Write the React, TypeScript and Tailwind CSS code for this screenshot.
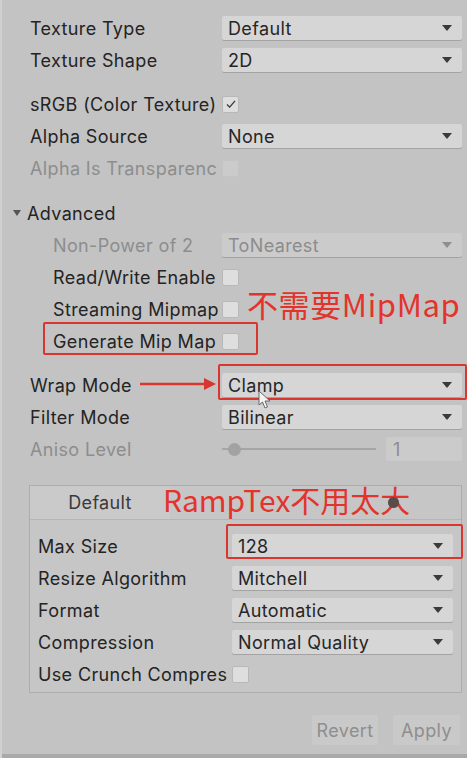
import type { ReactNode } from 'react'

const Caret = ({ dim }: { dim?: boolean }) => (
    <svg width="10" height="6" viewBox="0 0 10 6" className="shrink-0">
        <path d="M0 0 L10 0 L5 6 Z" fill={dim ? '#8f8f8f' : '#3a3a3a'} />
    </svg>
)

const Dropdown = ({ value, dim }: { value: string; dim?: boolean }) => (
    <div
        className={`flex h-[24px] items-center justify-between rounded-[2px] pl-[6px] pr-[10px] shadow-[0_1px_0_#a3a3a3] ${
            dim ? 'bg-[#cbcbcb] text-[#8c8c8c]' : 'bg-[#d6d6d6] text-[#262626]'
        }`}
    >
        <span className="whitespace-nowrap">{value}</span>
        <Caret dim={dim} />
    </div>
)

const Check = ({ checked, dim }: { checked?: boolean; dim?: boolean }) => (
    <div
        className={`flex h-[17px] w-[17px] items-center justify-center rounded-[2px] border ${
            dim ? 'border-[#c4c4c4] bg-[#cbcbcb]' : 'border-[#b8b8b8] bg-[#dedede]'
        }`}
    >
        {checked && (
            <svg width="10" height="8" viewBox="0 0 11 9">
                <path d="M1 5 L4 8 L10 1" stroke="#3a3a3a" strokeWidth="1.5" fill="none" />
            </svg>
        )}
    </div>
)

const Row = ({
    label,
    children,
    indent,
    dim,
    labelW = 'w-[192px]',
}: {
    label: string
    children?: ReactNode
    indent?: boolean
    dim?: boolean
    labelW?: string
}) => (
    <div className="flex h-[32px] items-center">
        <div
            className={`${labelW} shrink-0 whitespace-nowrap ${indent ? 'pl-[23px]' : ''} ${
                dim ? 'text-[#8d8d8d]' : 'text-[#242424]'
            }`}
        >
            {label}
        </div>
        <div className="flex-1">{children}</div>
    </div>
)

export default function App() {
    return (
        <div className="relative h-[758px] w-[467px] overflow-hidden border-l-[2px] border-[#d0d0d0] bg-[#c3c3c3] font-['Inter',sans-serif] text-[18px] tracking-[0.02em]">
            <div className="flex flex-col pl-[28px] pr-[5px] pt-[12px]">
                <Row label="Texture Type">
                    <Dropdown value="Default" />
                </Row>
                <Row label="Texture Shape">
                    <Dropdown value="2D" />
                </Row>

                <div className="mt-[12px]">
                    <Row label="sRGB (Color Texture)">
                        <Check checked />
                    </Row>
                    <Row label="Alpha Source">
                        <Dropdown value="None" />
                    </Row>
                    <Row label="Alpha Is Transparenc" dim>
                        <Check dim />
                    </Row>
                </div>

                <div className="mt-[13px]">
                    <div className="flex h-[32px] items-center gap-[6px] text-[#242424]">
                        <svg width="8" height="6" viewBox="0 0 8 6" className="-ml-[17px]">
                            <path d="M0 0 L8 0 L4 6 Z" fill="#555" />
                        </svg>
                        <span>Advanced</span>
                    </div>
                    <Row label="Non-Power of 2" indent dim>
                        <Dropdown value="ToNearest" dim />
                    </Row>
                    <Row label="Read/Write Enable" indent>
                        <Check />
                    </Row>
                    <Row label="Streaming Mipmap" indent>
                        <Check />
                    </Row>
                    <Row label="Generate Mip Map" indent>
                        <Check />
                    </Row>
                </div>

                <div className="mt-[12px]">
                    <Row label="Wrap Mode">
                        <Dropdown value="Clamp" />
                    </Row>
                    <Row label="Filter Mode">
                        <Dropdown value="Bilinear" />
                    </Row>
                    <Row label="Aniso Level" dim>
                        <div className="flex items-center gap-[10px]">
                            <div className="relative flex h-[14px] flex-1 items-center">
                                <div className="h-[2px] w-full bg-[#a6a6a6]" />
                                <div className="absolute left-[6px] h-[13px] w-[13px] rounded-full bg-[#a2a2a2]" />
                            </div>
                            <div className="flex h-[24px] w-[76px] items-center rounded-[2px] bg-[#cbcbcb] pl-[7px] text-[#8d8d8d]">
                                1
                            </div>
                        </div>
                    </Row>
                </div>

                <div className="-ml-px mt-[20px] border border-[#adadad] bg-[#c6c6c6] pb-[2px]">
                    <div className="flex h-[34px] border-b border-[#b5b5b5]">
                        <div className="flex w-[140px] items-center justify-center bg-[#cacaca] text-[#3a3a3a]">
                            Default
                        </div>
                    </div>
                    <div className="mt-[10px] px-[8px]">
                        <Row label="Max Size" labelW="w-[194px]">
                            <Dropdown value="128" />
                        </Row>
                        <Row label="Resize Algorithm" labelW="w-[194px]">
                            <Dropdown value="Mitchell" />
                        </Row>
                        <Row label="Format" labelW="w-[194px]">
                            <Dropdown value="Automatic" />
                        </Row>
                        <Row label="Compression" labelW="w-[194px]">
                            <Dropdown value="Normal Quality" />
                        </Row>
                        <Row label="Use Crunch Compres" labelW="w-[194px]">
                            <Check />
                        </Row>
                    </div>
                </div>

                <div className="mt-[22px] flex justify-end gap-[15px] pr-[2px]">
                    <div className="flex h-[30px] w-[66px] items-center justify-center rounded-[2px] bg-[#c9c9c9] text-[#8e8e8e]">
                        Revert
                    </div>
                    <div className="flex h-[30px] w-[67px] items-center justify-center rounded-[2px] bg-[#c9c9c9] text-[#8e8e8e]">
                        Apply
                    </div>
                </div>
            </div>
            <div className="absolute bottom-0 left-0 h-[4px] w-full bg-[#a9a9a9]" />

            {/* red annotations drawn over the inspector */}
            <div className="absolute left-[41px] top-[322px] h-[33px] w-[215px] rounded-[2px] border-[2px] border-[#d9362f]" />
            <div className="absolute left-[216px] top-[364px] h-[36px] w-[249px] rounded-[2px] border-[2px] border-[#d9362f]" />
            <div className="absolute left-[224px] top-[524px] h-[35px] w-[237px] rounded-[2px] border-[2px] border-[#d9362f]" />
            <div className="absolute left-[245px] top-[288px] whitespace-nowrap font-['Noto_Sans_CJK_SC',sans-serif] text-[31px] leading-none tracking-[0.02em] text-[#e2342c]">
                不需要MipMap
            </div>
            <div className="absolute left-[161px] top-[484px] whitespace-nowrap font-['Noto_Sans_CJK_SC',sans-serif] text-[30px] leading-none tracking-normal text-[#e2342c]">
                RampTex不用太大
            </div>
            <div className="absolute left-[386px] top-[497px] h-[11px] w-[11px] rounded-full bg-[#5a4a4a]" />
            <svg className="absolute left-[138px] top-[378px]" width="80" height="12" viewBox="0 0 80 12">
                <line x1="0" y1="6" x2="66" y2="6" stroke="#d9362f" strokeWidth="2.5" />
                <path d="M64 0 L76 6 L64 12 Z" fill="#d9362f" />
            </svg>
            <svg className="absolute left-[256px] top-[390px]" width="14" height="20" viewBox="0 0 14 20">
                <path d="M1 1 L1 15 L4.5 12 L7 18 L9.5 17 L7 11 L12 11 Z" fill="#f4f4f4" stroke="#6a6a6a" strokeWidth="1" />
            </svg>
        </div>
    )
}
